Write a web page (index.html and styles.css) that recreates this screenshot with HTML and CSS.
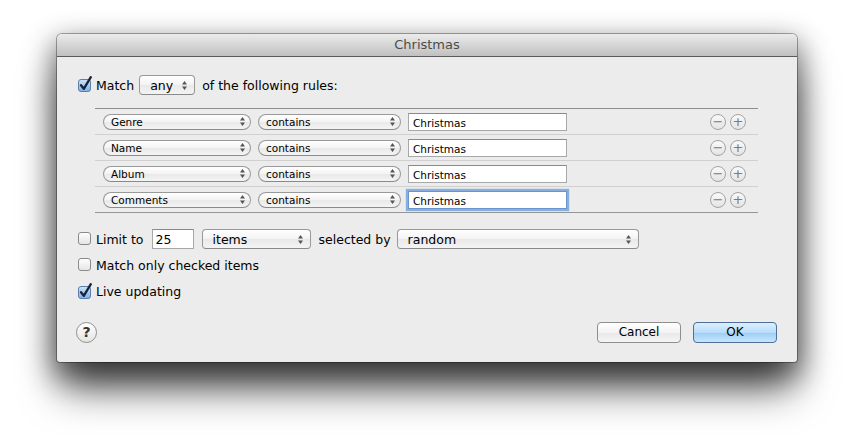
FILE: index.html
```
<!DOCTYPE html>
<html>
<head>
<meta charset="utf-8">
<link rel="stylesheet" href="styles.css">
</head>
<body>
<div class="window">
  <div class="titlebar">Christmas</div>
  <div class="content">
    <div class="match-row">
      <span class="cb checked"><svg width="16" height="16" viewBox="0 0 16 16"><defs><linearGradient id="bl" x1="0" y1="0" x2="0" y2="1"><stop offset="0" stop-color="#cfe3f8"/><stop offset="1" stop-color="#7fb0e6"/></linearGradient></defs><rect x="1.5" y="3.5" width="12" height="12" rx="2.5" fill="url(#bl)" stroke="#5d7ea9"/><path d="M4 9.2 L6.8 12.8 L13.8 1.2" fill="none" stroke="#17243d" stroke-width="2.3" stroke-linecap="round" stroke-linejoin="round"/></svg></span>
      <span class="lbl">Match</span>
      <span class="popup big any">any<svg class="arr" width="5" height="9" viewBox="0 0 5 9"><path d="M0 3.6 L2.5 0 L5 3.6Z M0 5.4 L2.5 9 L5 5.4Z" fill="#555"/></svg></span>
      <span class="lbl follow">of the following rules:</span>
    </div>

    <div class="rules">
      <div class="rule">
        <span class="popup small w1">Genre<svg class="arr" width="5" height="9" viewBox="0 0 5 9"><path d="M0 3.6 L2.5 0 L5 3.6Z M0 5.4 L2.5 9 L5 5.4Z" fill="#555"/></svg></span>
        <span class="popup small w2">contains<svg class="arr" width="5" height="9" viewBox="0 0 5 9"><path d="M0 3.6 L2.5 0 L5 3.6Z M0 5.4 L2.5 9 L5 5.4Z" fill="#555"/></svg></span>
        <span class="field">Christmas</span>
        <span class="spacer"></span>
        <span class="pm">−</span><span class="pm">+</span>
      </div>
      <div class="rule">
        <span class="popup small w1">Name<svg class="arr" width="5" height="9" viewBox="0 0 5 9"><path d="M0 3.6 L2.5 0 L5 3.6Z M0 5.4 L2.5 9 L5 5.4Z" fill="#555"/></svg></span>
        <span class="popup small w2">contains<svg class="arr" width="5" height="9" viewBox="0 0 5 9"><path d="M0 3.6 L2.5 0 L5 3.6Z M0 5.4 L2.5 9 L5 5.4Z" fill="#555"/></svg></span>
        <span class="field">Christmas</span>
        <span class="spacer"></span>
        <span class="pm">−</span><span class="pm">+</span>
      </div>
      <div class="rule">
        <span class="popup small w1">Album<svg class="arr" width="5" height="9" viewBox="0 0 5 9"><path d="M0 3.6 L2.5 0 L5 3.6Z M0 5.4 L2.5 9 L5 5.4Z" fill="#555"/></svg></span>
        <span class="popup small w2">contains<svg class="arr" width="5" height="9" viewBox="0 0 5 9"><path d="M0 3.6 L2.5 0 L5 3.6Z M0 5.4 L2.5 9 L5 5.4Z" fill="#555"/></svg></span>
        <span class="field">Christmas</span>
        <span class="spacer"></span>
        <span class="pm">−</span><span class="pm">+</span>
      </div>
      <div class="rule">
        <span class="popup small w1">Comments<svg class="arr" width="5" height="9" viewBox="0 0 5 9"><path d="M0 3.6 L2.5 0 L5 3.6Z M0 5.4 L2.5 9 L5 5.4Z" fill="#555"/></svg></span>
        <span class="popup small w2">contains<svg class="arr" width="5" height="9" viewBox="0 0 5 9"><path d="M0 3.6 L2.5 0 L5 3.6Z M0 5.4 L2.5 9 L5 5.4Z" fill="#555"/></svg></span>
        <span class="field focus">Christmas</span>
        <span class="spacer"></span>
        <span class="pm">−</span><span class="pm">+</span>
      </div>
    </div>

    <div class="options">
      <div class="opt">
        <span class="cb"><svg width="16" height="16" viewBox="0 0 16 16"><defs><linearGradient id="wh" x1="0" y1="0" x2="0" y2="1"><stop offset="0" stop-color="#ffffff"/><stop offset="1" stop-color="#e4e4e4"/></linearGradient></defs><rect x="1.5" y="1.5" width="12" height="12" rx="2.5" fill="url(#wh)" stroke="#8a8a8a"/></svg></span>
        <span class="lbl">Limit to</span>
        <span class="field num">25</span>
        <span class="popup big items">items<svg class="arr" width="5" height="9" viewBox="0 0 5 9"><path d="M0 3.6 L2.5 0 L5 3.6Z M0 5.4 L2.5 9 L5 5.4Z" fill="#555"/></svg></span>
        <span class="lbl sel">selected by</span>
        <span class="popup big random">random<svg class="arr" width="5" height="9" viewBox="0 0 5 9"><path d="M0 3.6 L2.5 0 L5 3.6Z M0 5.4 L2.5 9 L5 5.4Z" fill="#555"/></svg></span>
      </div>
      <div class="opt">
        <span class="cb"><svg width="16" height="16" viewBox="0 0 16 16"><rect x="1.5" y="1.5" width="12" height="12" rx="2.5" fill="url(#wh)" stroke="#8a8a8a"/></svg></span>
        <span class="lbl">Match only checked items</span>
      </div>
      <div class="opt">
        <span class="cb checked"><svg width="16" height="16" viewBox="0 0 16 16"><rect x="1.5" y="3.5" width="12" height="12" rx="2.5" fill="url(#bl)" stroke="#5d7ea9"/><path d="M4 9.2 L6.8 12.8 L13.8 1.2" fill="none" stroke="#17243d" stroke-width="2.3" stroke-linecap="round" stroke-linejoin="round"/></svg></span>
        <span class="lbl">Live updating</span>
      </div>
    </div>

    <div class="footer">
      <span class="help">?</span>
      <span class="spacer"></span>
      <span class="btn cancel">Cancel</span>
      <span class="btn ok">OK</span>
    </div>
  </div>
</div>
</body>
</html>
```
FILE: styles.css
```
html, body {
  margin: 0;
  background: #ffffff;
}
body {
  box-sizing: border-box;
  min-height: 441px;
  padding: 34px 0 0 57px;
  font-family: "DejaVu Sans", "Liberation Sans", sans-serif;
  color: #000;
}
.window {
  width: 740px;
  height: 328px;
  box-sizing: border-box;
  background: #ececec;
  border-radius: 5px 5px 3px 3px;
  box-shadow: 0 0 0 1px rgba(0,0,0,0.32), 0 10px 28px 4px rgba(0,0,0,0.45), 0 30px 40px -4px rgba(0,0,0,0.65);
}
.titlebar {
  height: 22px;
  line-height: 22px;
  border-bottom: 1px solid #5a5a5a;
  border-radius: 5px 5px 0 0;
  background: linear-gradient(#ebebeb, #c0c0c0);
  text-align: center;
  font-size: 13px;
  color: #4b4b4b;
}
.content {
  padding: 17px 20px 0 20px;
}
.match-row {
  display: flex;
  align-items: center;
  height: 22px;
}
.cb {
  width: 16px;
  height: 16px;
  display: inline-flex;
  margin-right: 3px;
}
.match-row .cb {
  margin-top: -2px;
}
.lbl {
  font-size: 12.5px;
  white-space: nowrap;
}
.popup {
  display: inline-flex;
  align-items: center;
  justify-content: space-between;
  box-sizing: border-box;
  border: 1px solid #999;
  border-bottom-color: #8a8a8a;
  background: linear-gradient(#ffffff, #f3f3f3 50%, #e9e9e9 52%, #f4f4f4);
  white-space: nowrap;
}
.popup .arr {
  flex: none;
}
.popup.big {
  height: 20px;
  border-radius: 4px;
  font-size: 12.5px;
  padding: 0 7px 0 10px;
}
.popup.any {
  width: 56px;
  margin-left: 5px;
  margin-right: 7px;
}
.popup.small {
  height: 16px;
  border-radius: 8px;
  font-size: 10.5px;
  padding: 0 5px 0 7px;
}
.w1 { width: 148px; }
.w2 { width: 143px; }
.rules {
  margin: 12px 0 0 18px;
  width: 663px;
  border-top: 1px solid #8e8e8e;
}
.rule {
  height: 25px;
  border-bottom: 1px solid #d0d0d0;
  display: flex;
  align-items: center;
  gap: 7px;
  padding: 0 12px 0 8px;
}
.rule:last-child {
  border-bottom-color: #959595;
}
.field {
  display: inline-flex;
  align-items: center;
  box-sizing: border-box;
  width: 159px;
  height: 18px;
  background: #fff;
  border: 1px solid #a8a8a8;
  border-top-color: #8a8a8a;
  font-size: 10.5px;
  padding: 2px 0 0 4px;
}
.field.focus {
  border-color: #6c94c8;
  box-shadow: 0 0 1px 2px rgba(110,160,220,0.8);
}
.spacer {
  flex: 1;
}
.pm {
  width: 16px;
  height: 16px;
  box-sizing: border-box;
  border-radius: 50%;
  border: 1px solid #a3a3a3;
  background: linear-gradient(#fafafa, #e3e3e3);
  color: #7a7a7a;
  font-size: 13px;
  line-height: 14px;
  text-align: center;
  margin-left: -3px;
}
.options {
  margin-top: 16px;
  display: flex;
  flex-direction: column;
  gap: 6px;
}
.opt {
  height: 20px;
  display: flex;
  align-items: center;
}
.field.num {
  width: 42px;
  height: 20px;
  font-size: 12.5px;
  margin-left: 8px;
  padding: 0 0 0 3px;
}
.popup.items {
  width: 109px;
  margin-left: 8px;
}
.lbl.sel {
  margin-left: 8px;
}
.popup.random {
  width: 242px;
  margin-left: 6px;
}
.footer {
  margin-top: 20px;
  height: 22px;
  display: flex;
  align-items: center;
}
.help {
  width: 21px;
  height: 21px;
  box-sizing: border-box;
  border-radius: 50%;
  border: 1px solid #8f8f8f;
  background: linear-gradient(#ffffff, #e4e4e4);
  font-size: 14px;
  font-weight: bold;
  color: #333;
  text-align: center;
  line-height: 19px;
  margin-left: -1px;
}
.btn {
  width: 84px;
  height: 21px;
  box-sizing: border-box;
  border-radius: 4px;
  font-size: 12px;
  text-align: center;
  line-height: 19px;
}
.cancel {
  border: 1px solid #8e8e8e;
  background: linear-gradient(#ffffff, #f3f3f3 50%, #e8e8e8 52%, #f5f5f5);
}
.ok {
  margin-left: 12px;
  border: 1px solid #4f6e98;
  background: linear-gradient(#dcefff, #b8ddfb 50%, #9ccdf7 52%, #c8e6fd);
}
```
